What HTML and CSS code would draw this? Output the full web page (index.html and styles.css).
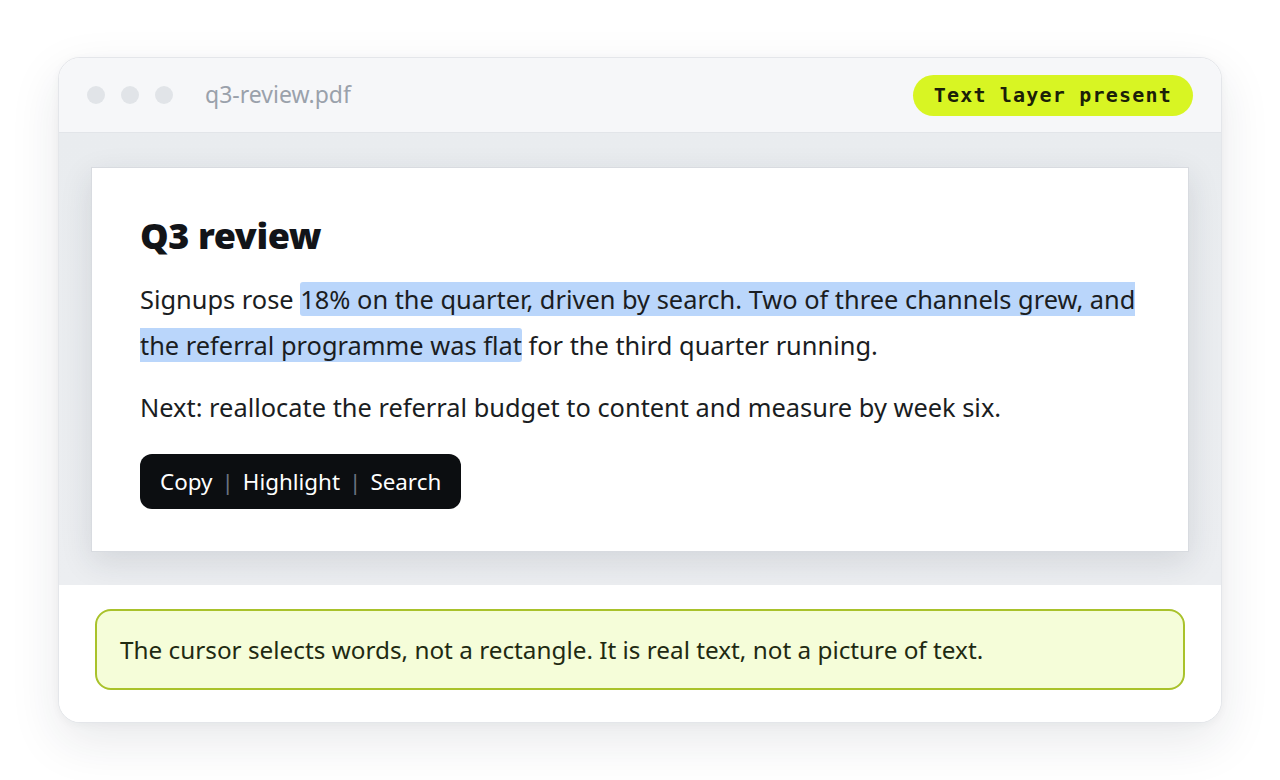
FILE: index.html
```html
<!DOCTYPE html>
<html lang="en">
<head>
  <meta charset="UTF-8" />
  <meta name="viewport" content="width=device-width, initial-scale=1.0"/>
  <title>q3-review.pdf</title>
  <link rel="stylesheet" href="styles.css">
</head>
<body>

  <div class="viewer">
    <!-- Barra da janela -->
    <div class="titlebar">
      <div class="dots">
        <span></span><span></span><span></span>
      </div>
      <div class="filename">q3-review.pdf</div>
      <div class="badge">Text layer present</div>
    </div>

    <!-- Área do documento -->
    <div class="stage">
      <div class="page">
        <h1>Q3 review</h1>
        <p>Signups rose <span class="sel">18% on the quarter, driven by search. Two of three channels grew, and the referral programme was flat</span> for the third quarter running.</p>
        <p>Next: reallocate the referral budget to content and measure by week six.</p>
        <div class="toolbar">
          <span>Copy</span>
          <span class="sep">|</span>
          <span>Highlight</span>
          <span class="sep">|</span>
          <span>Search</span>
        </div>
      </div>
    </div>

    <div class="note-area">
      <div class="note">The cursor selects words, not a rectangle. It is real text, not a picture of text.</div>
    </div>
  </div>

</body>
</html>
```

FILE: styles.css
```css
* {
  box-sizing: border-box;
}

html, body {
  margin: 0;
  padding: 0;
  height: 100%;
  background-color: #fff;
  font-family: "Noto Sans", "Open Sans", Arial, sans-serif;
  overflow: hidden;
}

body {
  padding: 57px 58px 0 58px;
}

.viewer {
  width: 1164px;
  background: #fff;
  border: 1px solid #e4e6ea;
  border-radius: 22px;
  overflow: hidden;
  box-shadow: 0 18px 50px rgba(30, 40, 60, 0.10), 0 2px 8px rgba(30, 40, 60, 0.04);
}

.titlebar {
  display: flex;
  align-items: center;
  height: 75px;
  padding: 0 28px 0 28px;
  background: #f6f7f9;
  border-bottom: 1px solid #e2e5e9;
}

.dots {
  display: flex;
  gap: 16px;
}

.dots span {
  width: 18px;
  height: 18px;
  border-radius: 50%;
  background: #e1e4e8;
}

.filename {
  flex: 1;
  margin-left: 32px;
  font-size: 23px;
  color: #9aa1ab;
  padding-bottom: 2px;
}

.badge {
  height: 41px;
  padding: 0 21px;
  display: flex;
  align-items: center;
  border-radius: 21px;
  background: #d8f523;
  color: #1b2008;
  font-family: "DejaVu Sans Mono", "Liberation Mono", monospace;
  font-weight: bold;
  font-size: 20px;
  letter-spacing: 1.2px;
}

.stage {
  padding: 34px 32px 33px 32px;
  background: linear-gradient(#e9ecef, #eceef1);
}

.page {
  background: #fff;
  border: 1px solid #d8dbe0;
  padding: 46px 48px 42px 48px;
  box-shadow: 0 10px 30px rgba(30, 40, 60, 0.12);
}

.page h1 {
  margin: 0 0 18px 0;
  font-size: 36px;
  line-height: 44px;
  font-weight: 900;
  color: #121418;
  letter-spacing: -0.4px;
}

.page p {
  margin: 0 0 16px 0;
  font-size: 25.4px;
  line-height: 46px;
  color: #1a1d22;
}

.sel {
  background: #bad6fb;
  border-radius: 3px;
}

.toolbar {
  display: inline-flex;
  align-items: center;
  gap: 9px;
  height: 55px;
  margin-top: 8px;
  padding: 0 20px;
  border-radius: 12px;
  background: #0c0e11;
  color: #fff;
  font-size: 22.4px;
}

.toolbar .sep {
  color: #6b7280;
}

.note-area {
  padding: 24px 36px 32px 36px;
  background: #fff;
}

.note {
  height: 81px;
  display: flex;
  align-items: center;
  padding: 0 23px;
  border: 2px solid #a9c22b;
  border-radius: 16px;
  background: #f5fdd9;
  color: #1f2a12;
  font-size: 24.3px;
}
```
